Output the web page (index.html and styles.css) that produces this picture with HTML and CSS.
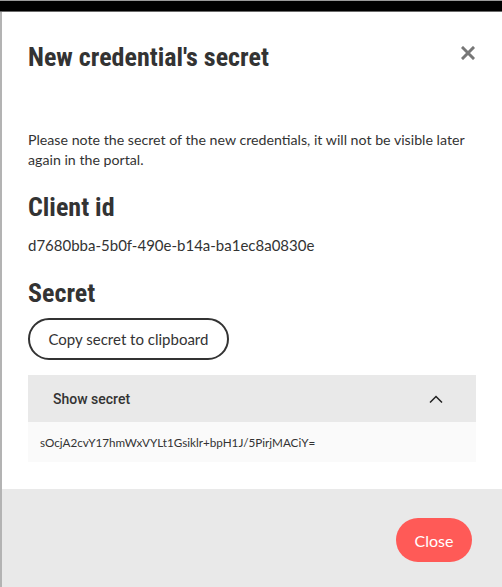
FILE: index.html
```html
<!DOCTYPE html>
<html>
<head>
<meta charset="utf-8">
<link rel="stylesheet" href="styles.css">
</head>
<body>
<div class="topbar"></div>
<div class="stage">
  <div class="modal">
    <div class="modal-body">
      <div class="modal-header">
        <h1 class="title">New credential's secret</h1>
        <button class="close-x" aria-label="Close">
          <svg width="14" height="14" viewBox="0 0 14 14"><path d="M2 2L12 12M12 2L2 12" stroke="#777" stroke-width="3" stroke-linecap="square"/></svg>
        </button>
      </div>
      <p class="note">Please note the secret of the new credentials, it will not be visible later again in the portal.</p>
      <h2 class="subtitle">Client id</h2>
      <p class="value">d7680bba-5b0f-490e-b14a-ba1ec8a0830e</p>
      <h2 class="subtitle secret-title">Secret</h2>
      <button class="btn-outline">Copy secret to clipboard</button>
      <div class="accordion">
        <div class="acc-head">
          <span class="acc-label">Show secret</span>
          <svg class="chev" width="14" height="8" viewBox="0 0 14 8"><path d="M1 7.5L7 1.5L13 7.5" fill="none" stroke="#222" stroke-width="1.5"/></svg>
        </div>
        <div class="acc-body">sOcjA2cvY17hmWxVYLt1Gsiklr+bpH1J/5PirjMACiY=</div>
      </div>
    </div>
    <div class="modal-footer">
      <button class="btn-primary">Close</button>
    </div>
  </div>
</div>
</body>
</html>
```
FILE: styles.css
```css
* { box-sizing: border-box; }
html, body { margin: 0; padding: 0; }
body {
  background: #b3b3b3;
  height: 587px;
  overflow: hidden;
  font-family: "Lato", "Open Sans", sans-serif;
  color: #333;
}
.topbar {
  height: 12px;
  border-top: 1px solid #9a9a9a;
  border-bottom: 1px solid #6a6a6a;
  background: #000;
}
.stage {
  padding-left: 2px;
}
.modal {
  background: #fff;
  display: flex;
  flex-direction: column;
  height: 575px;
}
.modal-body {
  padding: 28px 26px 27px 26px;
  flex: 0 0 auto;
}
.modal-header {
  display: flex;
  justify-content: space-between;
  align-items: flex-start;
}
.title {
  margin: 0;
  font-family: "Roboto", sans-serif;
  font-stretch: condensed;
  font-weight: 700;
  font-size: 26px;
  line-height: 34px;
  color: #333;
}
.close-x {
  border: 0;
  background: none;
  padding: 0;
  margin: 6px 1px 0 0;
  width: 14px;
  height: 14px;
}
.close-x svg { display: block; }
.note {
  margin: 56px 0 0 0;
  font-size: 14.2px;
  line-height: 20px;
}
.subtitle {
  margin: 20px 0 0 0;
  font-family: "Roboto", sans-serif;
  font-stretch: condensed;
  font-weight: 700;
  font-size: 26px;
  line-height: 34px;
  color: #333;
}
.value {
  margin: 11px 0 0 0;
  font-size: 15px;
  line-height: 20px;
}
.secret-title { margin-top: 21px; }
.btn-outline {
  margin-top: 8px;
  height: 42px;
  padding: 0 18.5px;
  border: 2px solid #333;
  border-radius: 21px;
  background: #fff;
  font-family: "Lato", "Open Sans", sans-serif;
  font-size: 15px;
  color: #333;
}
.accordion {
  margin-top: 15px;
}
.acc-head {
  background: #e9e9e9;
  height: 47px;
  display: flex;
  align-items: center;
  justify-content: space-between;
  padding: 0 33px 0 25px;
}
.acc-label {
  font-family: "Roboto", sans-serif;
  font-weight: 500;
  font-size: 14px;
  color: #333;
}
.acc-body {
  background: #fafafa;
  height: 40px;
  padding: 0 12px;
  display: flex;
  align-items: center;
  font-size: 11.7px;
  color: #333;
}
.modal-footer {
  background: #e9e9e9;
  flex: 1 1 auto;
  display: flex;
  justify-content: flex-end;
  align-items: flex-start;
  padding: 29px 30px 0 0;
}
.btn-primary {
  height: 44px;
  padding: 0 18.5px;
  border: 0;
  border-radius: 22px;
  background: #ff5a57;
  color: #fff;
  font-family: "Lato", "Open Sans", sans-serif;
  font-size: 16px;
}
```
